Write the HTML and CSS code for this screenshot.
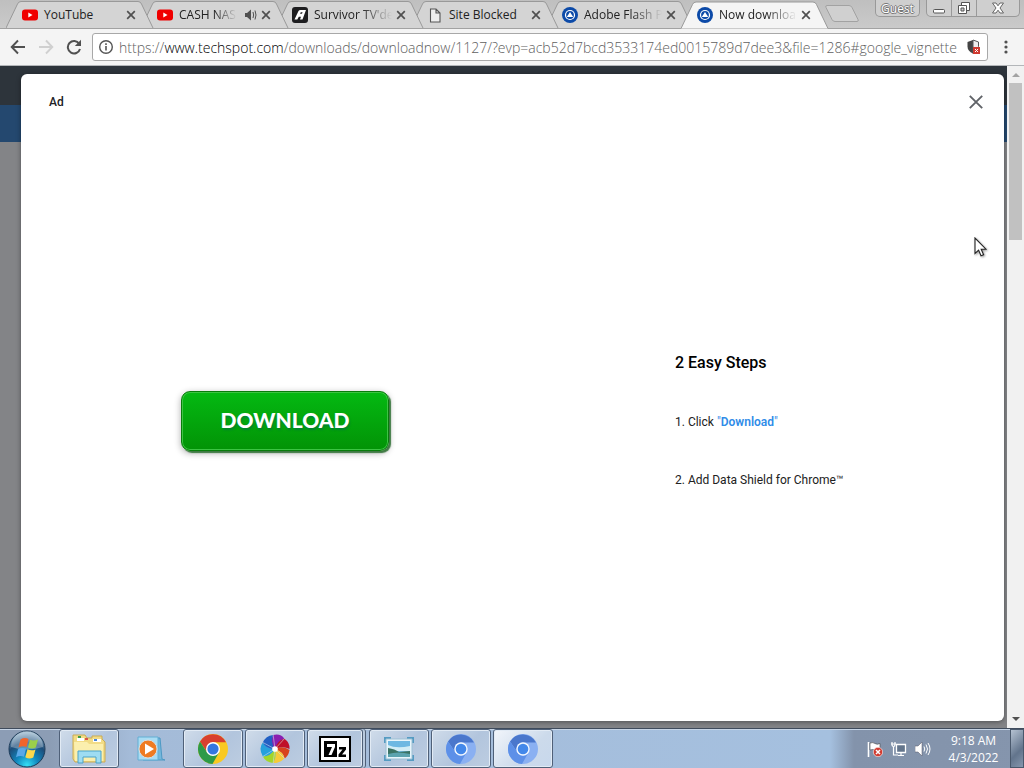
FILE: index.html
```html
<!DOCTYPE html>
<html lang="en">
<head>
<meta charset="utf-8">
<title>Now downloading</title>
<link rel="stylesheet" href="styles.css">
</head>
<body>
<svg class="defs" aria-hidden="true">
  <symbol id="tab-shape" viewBox="0 0 148 28">
    <path d="M0 28 L11.500 4 Q12.500 1.500 15 1.500 H132 Q134.500 1.500 135.500 4 L147 28"/>
  </symbol>
  <symbol id="yt" viewBox="0 0 16 16"><rect y="2.500" width="16" height="11" rx="3" fill="#f00000"/><path d="M6.300 5.500v5l4.200-2.500z" fill="#fff"/></symbol>
  <symbol id="ts" viewBox="0 0 16 16"><circle cx="8" cy="8" r="8" fill="#0c4aa8"/><circle cx="8" cy="8" r="5.100" fill="#fff"/><circle cx="8" cy="8" r="3.900" fill="#0c4aa8"/><path d="M8 4.900l3.200 5H4.800z" fill="#fff"/></symbol>
  <symbol id="x" viewBox="0 0 10 10"><path d="M1.200 1.200l7.600 7.600M8.800 1.200L1.200 8.800" stroke="#505050" stroke-width="1.700" fill="none"/></symbol>
  <symbol id="chromium" viewBox="0 0 30 30"><circle cx="15" cy="15" r="15" fill="#8ab0f2"/><path d="M2 7.500A15 15 0 0 1 28 8.500H15A6.500 6.500 0 0 0 9.400 18.200z" fill="#4a77cc"/><path d="M2 7.500A15 15 0 0 0 14 30l6.600-11.800A6.500 6.500 0 0 1 9.400 18.200z" fill="#5d90e8"/><circle cx="15" cy="15" r="6.700" fill="#f3f8ff"/><circle cx="15" cy="15" r="5.300" fill="#4388ea"/></symbol>
</svg>

<header class="browser">
  <div class="titlebar">
    <nav class="tabs" aria-label="Tabs">
      <div class="tab"><svg class="shape"><use href="#tab-shape"/></svg><svg class="fav"><use href="#yt"/></svg><span class="title">YouTube</span><button class="close" aria-label="Close tab"><svg><use href="#x"/></svg></button></div>
      <div class="tab"><svg class="shape"><use href="#tab-shape"/></svg><svg class="fav"><use href="#yt"/></svg><span class="title fade">CASH NAS</span><svg class="audio" viewBox="0 0 12 12"><path d="M0 4h2l4-3.500v11L2 8H0z" fill="#505050"/><path d="M8 3q1.300 3 0 6M10 1.500q2 4.500 0 9" fill="none" stroke="#505050"/></svg><button class="close" aria-label="Close tab"><svg><use href="#x"/></svg></button></div>
      <div class="tab"><svg class="shape"><use href="#tab-shape"/></svg><svg class="fav" viewBox="0 0 16 16"><rect width="16" height="16" rx="3" fill="#1d1d1f"/><path d="M2.500 12.500L6.500 4Q7 3 8.500 3H14L10.500 12.500H8l1-2.800H6.800L5.300 12.500zM8 6.800h2l.6-1.600H8.800z" fill="#fff"/></svg><span class="title fade">Survivor TV'de</span><button class="close" aria-label="Close tab"><svg><use href="#x"/></svg></button></div>
      <div class="tab"><svg class="shape"><use href="#tab-shape"/></svg><svg class="fav" viewBox="0 0 16 16"><path d="M3.500 2H9l4 4v9H3.500zM9 2v4h4" fill="#eee" stroke="#555" stroke-width="1.100"/></svg><span class="title">Site Blocked</span><button class="close" aria-label="Close tab"><svg><use href="#x"/></svg></button></div>
      <div class="tab"><svg class="shape"><use href="#tab-shape"/></svg><svg class="fav"><use href="#ts"/></svg><span class="title fade">Adobe Flash P</span><button class="close" aria-label="Close tab"><svg><use href="#x"/></svg></button></div>
      <div class="tab active"><svg class="shape"><use href="#tab-shape"/></svg><svg class="fav"><use href="#ts"/></svg><span class="title fade">Now downloa</span><button class="close" aria-label="Close tab"><svg><use href="#x"/></svg></button></div>
    </nav>
    <button class="newtab" aria-label="New tab"><svg viewBox="0 0 36 18"><path d="M3 .5H25Q27 .5 28 2.500L34 14.500Q35 16.500 33 16.500H11Q9 16.500 8 14.500L2 2.500Q1 .5 3 .5z" fill="#d0d0d0" stroke="#a2a2a2"/></svg></button>
    <div class="window">
      <button class="guest">Guest</button>
      <div class="controls">
        <button aria-label="Minimize"><svg viewBox="0 0 14 14"><rect x="1.500" y="8.500" width="11" height="3.500" rx="1" fill="#fff" stroke="#555"/></svg></button>
        <button aria-label="Restore"><svg viewBox="0 0 14 14"><path d="M4.500 1.500h8v8h-8z" fill="#fff" stroke="#555"/><path d="M1.500 4.500h8v8h-8z" fill="#fff" stroke="#555"/><path d="M4 7h3v3H4z" fill="#ccc" stroke="#555"/></svg></button>
        <button class="wide" aria-label="Close"><svg viewBox="0 0 14 14"><path d="M1.500 2h3.500l2 2.800L9 2h3.500L9 7l3.500 5H9L7 9.200 5 12H1.500L5 7z" fill="#fff" stroke="#666"/></svg></button>
      </div>
    </div>
  </div>
  <div class="toolbar">
    <div class="tools">
      <button class="tool" aria-label="Back"><svg viewBox="0 0 16 16"><path d="M15 8H2M8 1.500L1.700 8 8 14.500" fill="none" stroke="#505050" stroke-width="1.900"/></svg></button>
      <button class="tool" aria-label="Forward"><svg viewBox="0 0 16 16"><path d="M1 8h13M8 1.500L14.300 8 8 14.500" fill="none" stroke="#d0d0d0" stroke-width="1.900"/></svg></button>
      <button class="tool" aria-label="Reload"><svg viewBox="0 0 16 16"><path d="M13.200 4.800A6.200 6.200 0 1 0 14 10" fill="none" stroke="#505050" stroke-width="2"/><path d="M15 .8V7H8.800z" fill="#505050"/></svg></button>
    </div>
    <div class="omnibox">
      <svg class="info" viewBox="0 0 16 16"><circle cx="8" cy="8" r="6.300" fill="none" stroke="#555" stroke-width="1.400"/><path d="M8 7v4.500M8 4.300v1.600" stroke="#555" stroke-width="1.600"/></svg>
      <a class="url" href="#google_vignette">https://<b>www.techspot.com</b>/downloads/downloadnow/1127/?evp=acb52d7bcd3533174ed0015789d7dee3&amp;file=1286#google_vignette</a>
      <svg class="shield" viewBox="0 0 16 16"><path d="M7 1L1.500 3v4.500q0 4.500 5.500 7z" fill="#444"/><path d="M7 1l5.500 2v4.500q0 4.500-5.500 7z" fill="#eee" stroke="#555"/><rect x="7" y="8" width="7" height="7" fill="#cf3a30"/><path d="M9 10l3 3m0-3l-3 3" stroke="#fff"/></svg>
    </div>
    <button class="menu" aria-label="Menu"><svg viewBox="0 0 4 14"><circle cx="2" cy="2" r="1.600"/><circle cx="2" cy="7" r="1.600"/><circle cx="2" cy="12" r="1.600"/></svg></button>
  </div>
</header>

<div class="viewport">
  <main class="page">
    <section class="ad">
      <div class="adhead">
        <span>Ad</span>
        <button aria-label="Close ad"><svg viewBox="0 0 14 14"><path d="M.8.8l12.400 12.400M13.200.8L.8 13.200" stroke="#606368" stroke-width="1.900"/></svg></button>
      </div>
      <div class="adbody">
        <div class="cta"><button class="download">DOWNLOAD</button></div>
        <div class="steps">
          <h1>2 Easy Steps</h1>
          <p>1. Click <a href="#download">"<b>Download</b>"</a></p>
          <p>2. Add Data Shield for Chrome™</p>
        </div>
      </div>
    </section>
  </main>
  <div class="scroll" aria-hidden="true">
    <svg viewBox="0 0 8 4"><path d="M0 4l4-4 4 4z" fill="#a3a3a3"/></svg>
    <div class="track"><div class="thumb"></div></div>
    <svg viewBox="0 0 8 4"><path d="M0 0h8L4 4z" fill="#505050"/></svg>
  </div>
</div>

<footer class="taskbar">
  <button class="start" aria-label="Start"><svg viewBox="0 0 38 38">
    <defs><radialGradient id="orb" cx=".5" cy=".95" r=".9"><stop offset="0" stop-color="#35e0f5"/><stop offset=".35" stop-color="#1186bd"/><stop offset=".7" stop-color="#1d4c78"/><stop offset="1" stop-color="#8fb0c8"/></radialGradient></defs>
    <circle cx="19" cy="19" r="18" fill="url(#orb)" stroke="#1d3b58"/><path d="M3 17a16 16 0 0 1 32 0q-16 5-32 0z" fill="#fff" opacity=".3"/>
    <path d="M12.500 9.500q4-2.500 8-.5l-2 8q-4-1.700-8 .5z" fill="#f0642c"/><path d="M22 9.800q4 1.700 8-.3l-2.200 8q-3.800 2-7.800 0z" fill="#9bd04a"/><path d="M10 19.200q4-2.200 8-.5l-2 8q-4-1.800-8 .5z" fill="#5aa8e8"/><path d="M19.500 19.300q4 2 8 .2l-2.200 8q-4 2-8-.3z" fill="#fdd84c"/>
  </svg></button>
  <nav class="apps" aria-label="Taskbar">
    <button class="app" aria-label="Explorer"><svg class="w36" viewBox="0 0 36 30"><path d="M2 5V1h12l2 3h5V2h10v3l3 3v20H4L2 25z" fill="#f2dc86" stroke="#c9ab55"/><path d="M6 4h7v3H6zM22 5h8v3h-8z" fill="#fff"/><path d="M7 2h3v2H7z" fill="#3c9b48"/><path d="M14 4h3v2h-3z" fill="#d9534a"/><path d="M23 5h3v2h-3z" fill="#4a86d8"/><path d="M3 8h13l2 2h14v17H4z" fill="#fbefae"/><path d="M7 17h23v12h-5v-6H12v6H7z" fill="#9edcf2" stroke="#4aa3c9"/></svg></button>
    <button class="app plain" aria-label="Media Player"><svg class="w30" viewBox="0 0 30 26"><path d="M7 2h17l2 21 3 1H7z" fill="#74b8dc" stroke="#4d99c4"/><path d="M2 1h20v23H2z" fill="#a9dcf3" stroke="#62aed4"/><circle cx="12" cy="13" r="9" fill="#ef7b22" stroke="#d9dde0"/><path d="M9 7.500v11l9-5.500z" fill="#fff"/></svg></button>
    <button class="app" aria-label="Chrome"><svg viewBox="0 0 30 30"><circle cx="15" cy="15" r="15" fill="#f9c922"/><path d="M2 7.500A15 15 0 0 1 28 8.200H15L9 18z" fill="#d8402f"/><path d="M2 7.500A15 15 0 0 0 14.500 30L21 18.500 9.500 19z" fill="#2d9a48"/><circle cx="15" cy="15" r="7" fill="#fff"/><circle cx="15" cy="15" r="5.600" fill="#3477e0"/></svg></button>
    <button class="app" aria-label="Photo app"><svg class="w32" viewBox="0 0 32 32"><path d="M16 16Q9 10 14 1q8-2 12 4-6 2-10 11z" fill="#8a1fb0"/><path d="M16 16Q18 7 26 5q6 4 5.500 11-7-4-15.500 0z" fill="#c01028"/><path d="M16 16q9-4 15.500 1-1 6-5 9-2-7-10.500-10z" fill="#d8431c"/><path d="M16 16q9 3 10 10-5 5-12 5 4-6 2-15z" fill="#f6cb3a"/><path d="M16 16q2 9-2 15-8-1-11-7 8-1 13-8z" fill="#a3d62a"/><path d="M16 16Q11 24 3 24-2 15 3 9q4 7 13 7z" fill="#26a0dc"/><path d="M16 16Q6 16 3 9q3-7 11-8-3 8 2 15z" fill="#2260c4"/><path d="M16 16L14 1M16 16L26 5M16 16L3 9M16 16L3 24M16 16l-2 15M16 16l10 10" stroke="#d5dfec" stroke-width=".6"/><circle cx="16" cy="16" r="3" fill="#fff"/></svg></button>
    <button class="app stacked" aria-label="7-Zip"><svg class="w32" viewBox="0 0 32 26"><path d="M1 1h30v24H1z" fill="#fff" stroke="#000" stroke-width="2"/><path d="M5 5h13v16H5z"/><path d="M8 8h8v3l-3.500 8H9.500l3.500-8H8z" fill="#fff"/><path d="M20 11h7v2.500L23 18.500h4V21h-7.500v-2.500l4-5H20z"/></svg></button>
    <button class="app" aria-label="Picture viewer"><svg viewBox="0 0 30 26"><path d="M0 1h7v6H0zM23 1h7v6h-7zM0 19h7v6H0zM23 19h7v6h-7z" fill="#559bc2"/><path d="M2 3h26v20H2z" fill="#e8f5fb" stroke="#9cc0d4"/><path d="M4 5h22v16H4z" fill="#6eb8e2"/><path d="M4 9q8 4 22 1v5H4z" fill="#d2edf6"/><path d="M4 12q7 1 11 4l11-1v6H4z" fill="#3a7364"/><path d="M4 18q10-3 22 0v3H4z" fill="#5ba3ae"/></svg></button>
    <button class="app" aria-label="Chromium"><svg><use href="#chromium"/></svg></button>
    <button class="app current" aria-label="Chromium window"><svg><use href="#chromium"/></svg></button>
  </nav>
  <div class="tray">
    <svg viewBox="0 0 16 16"><path d="M1.500 1v15" stroke="#fff" stroke-width="1.600"/><path d="M3 2q3-1 5 .5t5 0V9q-3 1-5 0T3 9z" fill="#fff" stroke="#444" stroke-width=".6"/><circle cx="11" cy="11" r="4.700" fill="#d23b30" stroke="#fff" stroke-width=".6"/><path d="M9 9l4 4m0-4l-4 4" stroke="#fff" stroke-width="1.500"/></svg>
    <svg viewBox="0 0 16 16"><path d="M5.500 3.500h9v8h-9z" fill="#63758c" stroke="#fff" stroke-width="1.300"/><path d="M7 14.500h6M10 12v2M2.500 6v8H7" stroke="#fff" fill="none" stroke-width="1.200"/><path d="M1 1v2.500q0 2 1.500 2T4 3.500V1M0 3h5" stroke="#fff" fill="none" stroke-width="1.200"/></svg>
    <svg viewBox="0 0 16 16"><path d="M0 5h3l4-4v14l-4-4H0z" fill="#fff" stroke="#556" stroke-width=".5"/><path d="M9 5.500q1.500 2.500 0 5M11 3.500q3 4.500 0 9M13 2q4 6 0 12" stroke="#fff" fill="none"/></svg>
  </div>
  <time class="clock"><span>9:18 AM</span><span>4/3/2022</span></time>
  <button class="desktop" aria-label="Show desktop"></button>
</footer>
<svg class="cursor" viewBox="0 0 13 20" aria-hidden="true"><path d="M1 1v15.500l3.600-3.400L7 18.800l2.600-1.100-2.400-5.500H12z" fill="#fff" stroke="#222" stroke-width="1.100"/></svg>
</body>
</html>
```
FILE: styles.css
```css
* { box-sizing: border-box; }
body {
  margin: 0;
  height: 100vh;
  display: flex;
  flex-direction: column;
  overflow: hidden;
  font-family: "Open Sans", "Noto Sans", sans-serif;
  font-size: 12px;
}
button { border: 0; padding: 0; background: none; font: inherit; display: flex; align-items: center; justify-content: center; }
a { text-decoration: none; color: inherit; }
svg { display: block; flex: none; }
.defs { position: absolute; width: 0; height: 0; }

/* Title bar and tabs */
.titlebar {
  display: flex;
  height: 29px;
  padding-left: 6px;
  background: linear-gradient(#bfbfbf, #cacaca);
  border-bottom: 1px solid #a2a2a2;
}
.tabs { display: flex; }
.tab {
  position: relative;
  display: flex;
  align-items: center;
  width: 148px;
  height: 29px;
  margin-right: -13px;
  padding: 0 17px 0 16px;
}
.tab:nth-child(1) { z-index: 5; }
.tab:nth-child(2) { z-index: 4; }
.tab:nth-child(3) { z-index: 3; }
.tab:nth-child(4) { z-index: 2; }
.tab:nth-child(5) { z-index: 1; }
.tab.active { z-index: 6; }
.shape { position: absolute; inset: 0; width: 148px; height: 28px; fill: #d4d4d4; stroke: #999; }
.active .shape { height: 29px; fill: #f5f5f5; }
.fav { position: relative; width: 16px; height: 16px; margin-right: 6px; }
.title { position: relative; flex: 1; min-width: 0; white-space: nowrap; color: #222; }
.fade { mask-image: linear-gradient(to right, #000 60%, transparent); }
.audio { position: relative; width: 12px; height: 12px; margin-left: 8px; }
.close { position: relative; width: 12px; height: 12px; margin-left: 3px; }
.close svg { width: 10px; height: 10px; }
.newtab { margin-left: 8px; }
.newtab svg { width: 36px; height: 18px; }
.window { display: flex; margin-left: auto; padding-right: 4px; gap: 6px; align-items: flex-start; }
.guest, .controls { height: 17px; border: 1px solid #999; border-top: 0; border-radius: 0 0 5px 5px; background: #cfcfcf; }
.guest { width: 45px; color: #fff; text-shadow: 1px 0 #777, -1px 0 #777, 0 1px #777, 0 -1px #777; }
.controls { display: flex; }
.controls button { width: 25px; height: 16px; border-right: 1px solid #999; }
.controls .wide { width: 42px; border-right: 0; }
.controls svg { width: 14px; height: 14px; }

/* Toolbar */
.toolbar { display: flex; align-items: center; height: 37px; padding: 0 16px 0 10px; background: #f4f4f4; border-bottom: 1px solid #b3b6b9; }
.tools { display: flex; gap: 12px; margin-right: 10px; }
.tool, .tool svg, .info, .shield { width: 16px; height: 16px; }
.omnibox { flex: 1; min-width: 0; display: flex; align-items: center; height: 28px; margin-right: 16px; padding: 0 5px; border: 1px solid #a8a8a8; border-radius: 3px; background: #fff; }
.url { flex: 1; min-width: 0; margin-left: 5px; white-space: nowrap; font-size: 14px; font-weight: 300; color: #606060; }
.url b { font-weight: 300; color: #000; }
.menu svg { width: 4px; height: 14px; fill: #505050; }

/* Web page behind the interstitial */
.viewport { flex: 1; min-height: 0; display: flex; }
.page {
  flex: 1;
  display: flex;
  padding: 8px 3px 7px 21px;
  background: linear-gradient(#2d343b 39px, #24486f 39px, #24486f 76px, #838487 76px);
}
.ad { flex: 1; display: flex; flex-direction: column; border-radius: 6px; background: #fff; box-shadow: 0 1px 5px #0006; font-family: Roboto, sans-serif; }
.adhead { display: flex; align-items: center; justify-content: space-between; height: 56px; padding: 0 21px 0 28px; font-weight: 500; color: #202124; }
.adhead svg { width: 14px; height: 14px; }
.adbody { flex: 1; display: grid; grid-template-columns: 528px 1fr; align-items: center; padding-bottom: 10px; }
.cta { display: flex; justify-content: center; }
.download {
  width: 208px;
  height: 60px;
  padding-bottom: 2px;
  border: 1px solid #087c0b;
  border-radius: 9px;
  background: linear-gradient(#04b912, #029306);
  box-shadow: inset 0 0 0 1px #3cc443, 2px 2px 1px #3f7a43, 0 2px 7px #0005;
  color: #fff;
  font: 900 21px Lato, sans-serif;
  text-shadow: 1px 2px 2px #0658;
}
.steps { padding-left: 126px; color: #212121; }
.steps h1 { margin: 0; font-size: 16px; font-weight: 500; line-height: 20px; color: #000; }
.steps p { margin: 40px 0 0; line-height: 18px; }
.steps a { color: #2f8ce8; }
.steps b { font-weight: 600; }
.scroll { width: 17px; display: flex; flex-direction: column; align-items: center; padding: 7px 0; gap: 6px; background: #f1f1f1; }
.scroll svg { width: 8px; height: 4px; }
.track { flex: 1; width: 13px; }
.thumb { height: 25%; background: #c1c1c1; }

/* Taskbar */
.taskbar {
  display: flex;
  height: 40px;
  border-top: 1px solid #3f4b5c;
  background: linear-gradient(to right, #8c9db5 50px, #a4bbd8 130px, #a5c0df calc(100% - 194px), #8393ab calc(100% - 170px), #8595ad);
  box-shadow: inset 0 1px #c6d4e5;
}
.start { width: 54px; }
.start svg { width: 38px; height: 38px; }
.apps { display: flex; gap: 2px; padding-left: 5px; }
.app { width: 60px; height: 39px; border: 1px solid #4f6078; border-radius: 3px; background: linear-gradient(135deg, #d0dcea, #b2c5dd 55%, #bdcde1); box-shadow: inset 0 0 0 1px #e2ebf5; }
.app.plain { border-color: transparent; background: none; box-shadow: none; }
.app.current { background: linear-gradient(135deg, #f2f6fb, #ccdaeb 60%, #c8d8ec); }
.app.stacked { width: 56px; margin-right: 4px; box-shadow: inset 0 0 0 1px #e2ebf5, 2px 0 #b9cade, 3px 0 #4f6078; }
.app svg { width: 30px; height: 30px; }
.app .w36 { width: 36px; }
.app .w32 { width: 32px; }
.tray { display: flex; align-items: center; gap: 8px; margin-left: auto; }
.tray svg { width: 16px; height: 16px; }
.clock { display: flex; flex-direction: column; width: 79px; padding-left: 6px; align-items: center; justify-content: center; line-height: 17px; color: #fff; }
.desktop { width: 14px; border: 1px solid #49586c; background: linear-gradient(135deg, #b5c2d2, #62748c 60%, #8596ad); }

.cursor { position: absolute; left: 974px; top: 237px; width: 13px; height: 20px; filter: drop-shadow(1px 1px 1px #0006); }
```
